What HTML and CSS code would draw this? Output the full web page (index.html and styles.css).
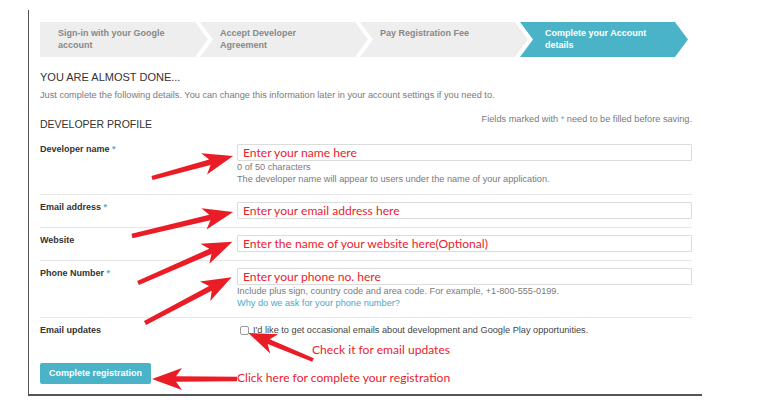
FILE: index.html
```html
<!DOCTYPE html>
<html>
<head>
<meta charset="utf-8">
<link rel="stylesheet" href="styles.css">
</head>
<body>
<div class="frame">
  <div class="steps">
    <div class="step first">Sign-in with your Google<br>account</div>
    <div class="step">Accept Developer<br>Agreement</div>
    <div class="step">Pay Registration Fee</div>
    <div class="step active">Complete your Account<br>details</div>
  </div>

  <h1 class="heading">YOU ARE ALMOST DONE...</h1>
  <p class="intro">Just complete the following details. You can change this information later in your account settings if you need to.</p>

  <div class="section-head">
    <h2 class="section-title">DEVELOPER PROFILE</h2>
    <div class="required-note">Fields marked with <span class="star">*</span> need to be filled before saving.</div>
  </div>

  <div class="rows">
    <div class="row first-row">
      <div class="label">Developer name <span class="star">*</span></div>
      <div class="field">
        <div class="input"><span class="note">Enter your name here</span></div>
        <div class="help">0 of 50 characters</div>
        <div class="help">The developer name will appear to users under the name of your application.</div>
      </div>
    </div>
    <div class="row">
      <div class="label">Email address <span class="star">*</span></div>
      <div class="field">
        <div class="input"><span class="note">Enter your email address here</span></div>
      </div>
    </div>
    <div class="row">
      <div class="label">Website</div>
      <div class="field">
        <div class="input"><span class="note">Enter the name of your website here(Optional)</span></div>
      </div>
    </div>
    <div class="row">
      <div class="label">Phone Number <span class="star">*</span></div>
      <div class="field">
        <div class="input"><span class="note">Enter your phone no. here</span></div>
        <div class="help">Include plus sign, country code and area code. For example, +1-800-555-0199.</div>
        <div class="help link">Why do we ask for your phone number?</div>
      </div>
    </div>
    <div class="row last-row">
      <div class="label">Email updates</div>
      <div class="field">
        <div class="check-line"><span class="checkbox"></span><span class="check-text">I'd like to get occasional emails about development and Google Play opportunities.</span></div>
        <div class="note check-note">Check it for email updates</div>
      </div>
    </div>
    <div class="submit-row">
      <div><span class="button">Complete registration</span></div>
      <div class="note submit-note">Click here for complete your registration</div>
    </div>
  </div>
</div>

<svg class="arrows" width="768" height="404" viewBox="0 0 768 404">
  <defs>
    <polygon id="a84" points="0,-2.2 60,-2.8 54,-11 84,0 54,11 60,2.8 0,2.2"/>
    <polygon id="a104" points="0,-2.2 80,-2.8 74,-11 104,0 74,11 80,2.8 0,2.2"/>
    <polygon id="a103" points="0,-2.2 79,-2.8 73,-11 103,0 73,11 79,2.8 0,2.2"/>
    <polygon id="a98" points="0,-2.2 74,-2.8 68,-11 98,0 68,11 74,2.8 0,2.2"/>
    <polygon id="a70" points="0,-2 48,-2.6 42,-10.5 70,0 42,10.5 48,2.6 0,2"/>
    <polygon id="a85" points="0,-2.2 61,-2.8 55,-11 85,0 55,11 61,2.8 0,2.2"/>
  </defs>
  <g fill="#ea1c26">
    <use href="#a84" transform="translate(152 178) rotate(-15.2)"/>
    <use href="#a104" transform="translate(132 236) rotate(-13.4)"/>
    <use href="#a103" transform="translate(138 283) rotate(-23.6)"/>
    <use href="#a98" transform="translate(145 323) rotate(-27.9)"/>
    <use href="#a70" transform="translate(313 360) rotate(-157.4)"/>
    <use href="#a85" transform="translate(237 379) rotate(180)"/>
  </g>
</svg>
</body>
</html>
```

FILE: styles.css
```css
html, body {
  margin: 0;
  padding: 0;
  background: #ffffff;
}

body {
  width: 768px;
  height: 404px;
  overflow: hidden;
  position: relative;
  font-family: "Liberation Sans", Arial, Helvetica, sans-serif;
  color: #333333;
}

.frame {
  margin: 10px 0 0 28px;
  width: 674px;
  height: 386px;
  box-sizing: border-box;
  border-left: 1px solid #555555;
  border-bottom: 2px solid #555555;
  padding: 12px 10px 0 11px;
}

/* progress steps */
.steps {
  display: flex;
  height: 35px;
}

.step {
  width: 168px;
  height: 35px;
  box-sizing: border-box;
  flex: none;
  margin-left: -8px;
  padding: 5px 8px 0 20px;
  background: #eeeeee;
  color: #888888;
  font-size: 9px;
  font-weight: bold;
  line-height: 12px;
  clip-path: polygon(0 0, calc(100% - 13px) 0, 100% 50%, calc(100% - 13px) 100%, 0 100%, 13px 50%);
}

.step.first {
  margin-left: 0;
  padding-left: 18px;
  clip-path: polygon(0 0, calc(100% - 13px) 0, 100% 50%, calc(100% - 13px) 100%, 0 100%);
}

.step.active {
  background: #4bb3c8;
  color: #ffffff;
  padding-left: 25px;
}

/* headings */
.heading {
  margin: 14px 0 0;
  font-size: 11px;
  line-height: 13px;
  font-weight: normal;
  color: #333333;
}

.intro {
  margin: 6px 0 0;
  font-size: 9.2px;
  line-height: 11px;
  color: #7a7a7a;
}

.section-head {
  display: flex;
  justify-content: space-between;
  align-items: flex-start;
  margin-top: 13px;
}

.section-title {
  margin: 3px 0 0;
  font-size: 10.5px;
  line-height: 14px;
  font-weight: normal;
  color: #333333;
}

.required-note {
  font-size: 9.2px;
  line-height: 10px;
  color: #7a7a7a;
}

.star {
  color: #4bb3c8;
}

/* form rows */
.rows {
  margin-top: 13px;
}

.row {
  display: grid;
  grid-template-columns: 197px 1fr;
  border-top: 1px solid #e6e6e6;
  padding: 7px 0 8px;
}

.row.first-row {
  border-top: none;
  padding: 0 0 9px;
}

.row.last-row {
  padding-bottom: 0;
}

.label {
  font-size: 9px;
  font-weight: bold;
  line-height: 9px;
  padding-top: 1px;
  color: #333333;
}

.input {
  height: 17px;
  box-sizing: border-box;
  border: 1px solid #dcdcdc;
  border-radius: 1px;
  padding-left: 5px;
  display: flex;
  align-items: center;
  overflow: visible;
}

.note {
  font-family: Lato, "Open Sans", sans-serif;
  font-size: 12.1px;
  line-height: 15px;
  color: #e8222c;
  white-space: nowrap;
}

.help {
  font-size: 9.2px;
  line-height: 12px;
  color: #7a7a7a;
}

.help.link {
  color: #4aa8c8;
}

.check-line {
  display: flex;
  align-items: center;
  height: 11px;
  padding-left: 3px;
}

.checkbox {
  width: 7px;
  height: 7px;
  border: 1px solid #9a9a9a;
  border-radius: 2px;
  background: #ffffff;
  margin-right: 4px;
  flex: none;
}

.check-text {
  font-size: 9.2px;
  line-height: 11px;
  color: #444444;
}

.check-note {
  margin: 6px 0 0 75px;
}

.submit-row {
  display: grid;
  grid-template-columns: 197px 1fr;
  margin-top: 5px;
}

.button {
  display: inline-block;
  width: 111px;
  height: 21px;
  box-sizing: border-box;
  background: #4bb3c8;
  border-radius: 2px;
  color: #ffffff;
  font-size: 9px;
  font-weight: bold;
  line-height: 21px;
  text-align: center;
}

.submit-note {
  padding-top: 8px;
}

.arrows {
  position: absolute;
  top: 0;
  left: 0;
  pointer-events: none;
}
```
